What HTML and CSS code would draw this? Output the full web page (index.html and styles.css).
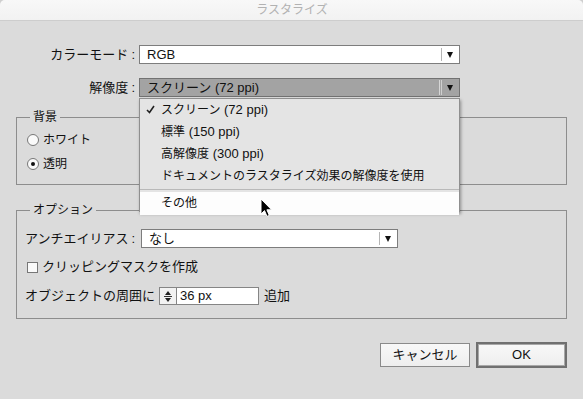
FILE: index.html
```html
<!DOCTYPE html>
<html lang="ja">
<head>
    <meta charset="UTF-8">
    <meta name="viewport" content="width=device-width, initial-scale=1.0">
    <title>ラスタライズ</title>
    <link rel="stylesheet" href="styles.css">
</head>
<body>
    <div class="dialog">
        <div class="titlebar">ラスタライズ</div>

        <div class="content">
            <div class="form-row">
                <label class="row-label">カラーモード<span class="colon">:</span></label>
                <div class="select">
                    <span class="select-value">RGB</span>
                    <span class="select-sep"></span>
                    <span class="select-arrow"></span>
                </div>
            </div>

            <div class="form-row res-row">
                <label class="row-label">解像度<span class="colon">:</span></label>
                <div class="select select-open">
                    <span class="select-value">スクリーン (72 ppi)</span>
                    <span class="select-sep"></span>
                    <span class="select-arrow"></span>
                </div>

                <!-- open menu of the resolution select -->
                <ul class="menu">
                    <li class="menu-item checked">
                        <svg class="check" width="9" height="9" viewBox="0 0 9 9">
                            <path d="M1 5 L3.5 7.5 L8 1" fill="none" stroke="#222" stroke-width="1.6"/>
                        </svg>
                        スクリーン<span class="lat"> (72 ppi)</span>
                    </li>
                    <li class="menu-item">標準<span class="lat"> (150 ppi)</span></li>
                    <li class="menu-item">高解像度<span class="lat"> (300 ppi)</span></li>
                    <li class="menu-item">ドキュメントのラスタライズ効果の解像度を使用</li>
                    <li class="menu-sep"></li>
                    <li class="menu-item hover">その他</li>
                    <svg class="cursor" width="13" height="20" viewBox="0 0 13 20">
                        <path d="M1 1 L1 16 L4.5 12.6 L7 18.4 L9.3 17.4 L6.9 11.8 L11.6 11.8 Z" fill="#000" stroke="#fff" stroke-width="1"/>
                    </svg>
                </ul>
            </div>

            <fieldset class="group group-bg">
                <legend>背景</legend>
                <div class="radio-row">
                    <span class="radio"></span>ホワイト
                </div>
                <div class="radio-row">
                    <span class="radio on"></span>透明
                </div>
            </fieldset>

            <fieldset class="group group-opt">
                <legend>オプション</legend>
                <div class="opt-row">
                    <label class="opt-label">アンチエイリアス<span class="colon">:</span></label>
                    <div class="select select-small">
                        <span class="select-value">なし</span>
                        <span class="select-sep"></span>
                        <span class="select-arrow"></span>
                    </div>
                </div>
                <div class="opt-row check-row">
                    <span class="checkbox"></span>クリッピングマスクを作成
                </div>
                <div class="opt-row spin-row">
                    <span class="opt-text">オブジェクトの周囲に</span>
                    <span class="spinner">
                        <span class="tri-up"></span>
                        <span class="spin-line"></span>
                        <span class="tri-down"></span>
                    </span>
                    <span class="num-input">36 px</span>
                    <span class="unit">追加</span>
                </div>
            </fieldset>

            <div class="buttons">
                <button class="btn">キャンセル</button>
                <button class="btn btn-default">OK</button>
            </div>
        </div>
    </div>
</body>
</html>
```

FILE: styles.css
```css
* {
    box-sizing: border-box;
    margin: 0;
    padding: 0;
}

html {
    background: #cfcfcf;
}

body {
    font-family: 'Liberation Sans', 'Noto Sans CJK JP', sans-serif;
    font-size: 12px;
    line-height: 18px;
    color: #111;
}

.dialog {
    width: 583px;
    height: 399px;
    background: #dbdbdb;
    border-radius: 5px 5px 0 0;
    overflow: hidden;
}

.titlebar {
    height: 21px;
    line-height: 21px;
    text-align: center;
    color: #b2b2b2;
    background: linear-gradient(#f8f8f8, #f2f2f2);
    border-bottom: 1px solid #cdcdcd;
    padding-left: 1px;
}

.content {
    padding: 24px 16px 0;
}

/* top rows */
.form-row {
    display: flex;
    align-items: center;
    height: 19px;
}

.res-row {
    margin-top: 14px;
    position: relative;
}

.row-label {
    width: 120px;
    text-align: right;
    margin-right: 3px;
    font-size: 13px;
}

.colon {
    margin-left: 3px;
    margin-right: 1px;
}

/* select boxes */
.select {
    display: flex;
    align-items: center;
    width: 321px;
    height: 19px;
    background: #fff;
    border: 1px solid #7d7d7d;
    font-size: 13px;
}

.select-value {
    flex: 1;
    padding-left: 7px;
    line-height: 17px;
}

.select-sep {
    width: 1px;
    height: 13px;
    background: #b5b5b5;
}

.select-arrow {
    width: 17px;
    height: 17px;
    position: relative;
}

.select-arrow::after {
    content: '';
    position: absolute;
    left: 5px;
    top: 6px;
    border-left: 3.5px solid transparent;
    border-right: 3.5px solid transparent;
    border-top: 6px solid #111;
}

.select-open {
    background: #a3a3a3;
    border-color: #727272;
}

.select-open .select-sep {
    width: 3px;
    height: 15px;
    background: none;
    border-left: 1px solid #d6d6d6;
    border-right: 1px solid #cfcfcf;
}

.select-small {
    width: 257px;
    margin-left: 4px;
}

/* dropdown menu */
.menu {
    position: absolute;
    top: 20px;
    left: 123px;
    width: 321px;
    height: 114px;
    list-style: none;
    background: #e4e4e4;
    border: 1px solid #8f8f8f;
    box-shadow: 1px 2px 3px rgba(0, 0, 0, 0.35);
    z-index: 5;
}

.menu-item {
    height: 22px;
    line-height: 22px;
    padding-left: 21px;
    position: relative;
}

.menu-item .lat {
    font-size: 13px;
}

.menu-item .check {
    position: absolute;
    left: 6px;
    top: 6px;
}

.menu-sep {
    margin-top: 2px;
    border-top: 1px solid #b9b9b9;
    height: 3px;
    background: #e4e4e4;
}

.menu-item.hover {
    background: #fdfdfd;
    height: 23px;
}

.cursor {
    position: absolute;
    left: 120px;
    top: 99px;
}

/* group boxes */
.group {
    border: 1px solid #8d8d8d;
    padding: 0 8px;
}

.group legend {
    padding: 0 3px;
    margin-left: 5px;
    line-height: 16px;
}

.group-bg {
    margin-top: 12px;
    padding-top: 6px;
    padding-bottom: 11px;
}

.radio-row {
    display: flex;
    align-items: center;
    height: 18px;
    margin-bottom: 6px;
    padding-left: 2px;
}

.radio-row:last-child {
    margin-bottom: 0;
}

.radio {
    width: 12px;
    height: 12px;
    border: 1px solid #777;
    border-radius: 50%;
    background: #fafafa;
    margin-right: 4px;
    display: flex;
    align-items: center;
    justify-content: center;
}

.radio.on::after {
    content: '';
    width: 4px;
    height: 4px;
    border-radius: 50%;
    background: #111;
}

.group-opt {
    margin-top: 17px;
    padding-top: 11px;
    padding-bottom: 13px;
}

.opt-row {
    display: flex;
    align-items: center;
    height: 19px;
    font-size: 13px;
}

.opt-label {
    width: 112px;
}

.check-row {
    margin-top: 10px;
    height: 18px;
    padding-left: 2px;
}

.checkbox {
    width: 11px;
    height: 11px;
    border: 1px solid #777;
    background: #fafafa;
    margin-right: 4px;
}

.spin-row {
    margin-top: 11px;
    height: 18px;
}

.opt-text {
    width: 134px;
}

.spinner {
    width: 18px;
    height: 18px;
    border: 1px solid #858585;
    background: #f2f2f2;
    display: flex;
    flex-direction: column;
    align-items: center;
    justify-content: center;
    gap: 1px;
}

.tri-up {
    border-left: 3px solid transparent;
    border-right: 3px solid transparent;
    border-bottom: 4px solid #222;
}

.tri-down {
    border-left: 3px solid transparent;
    border-right: 3px solid transparent;
    border-top: 4px solid #222;
}

.spin-line {
    width: 8px;
    height: 1px;
    background: #333;
}

.num-input {
    width: 82px;
    height: 18px;
    border: 1px solid #858585;
    border-left: none;
    background: #fff;
    padding-left: 3px;
    line-height: 16px;
}

.unit {
    margin-left: 5px;
}

/* buttons */
.buttons {
    display: flex;
    justify-content: flex-end;
    align-items: center;
    gap: 6px;
    margin-top: 23px;
}

.btn {
    font: inherit;
    font-size: 13px;
    color: #111;
    width: 90px;
    height: 24px;
    border: 1px solid #8a8a8a;
    background: linear-gradient(#f8f8f8, #eeeeee);
}

.btn-default {
    width: 91px;
    height: 26px;
    border: 2px solid #707070;
    box-shadow: inset 0 0 0 1px #a8a8a8;
}
```
